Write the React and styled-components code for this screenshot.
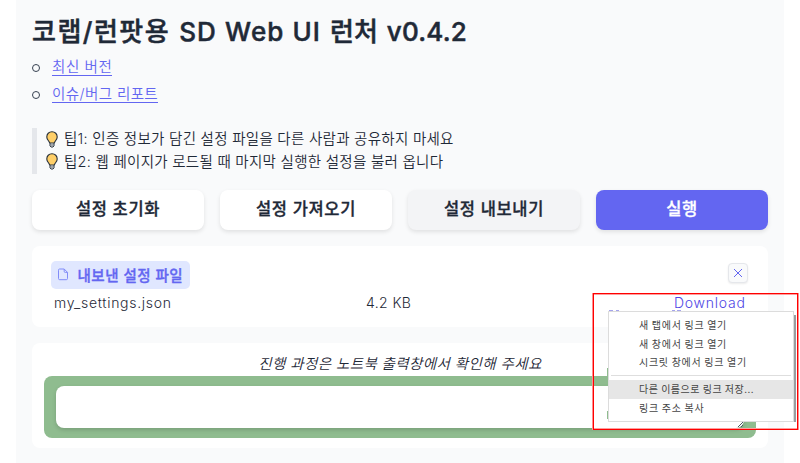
import React from "react";
import styled, { createGlobalStyle } from "styled-components";

const Global = createGlobalStyle`
  * { box-sizing: border-box; }
  body {
    margin: 0;
    background: #fff;
    overflow: hidden;
    color: #1f2937;
    font-family: Inter, "Noto Sans CJK KR", sans-serif;
  }
`;

const Page = styled.main`
  position: relative;
  width: 768px;
  height: 463px;
  margin-left: 16px;
  padding: 14px 16px 0;
  background: #f9fafb;
`;

const Title = styled.h1`
  display: flex;
  gap: 9px;
  margin: 0;
  height: 36px;
  line-height: 36px;
  font-size: 26px;
  font-weight: 500;
  -webkit-text-stroke: 0.5px currentColor;
  white-space: nowrap;
`;

const Run = styled.span`
  letter-spacing: ${(p) => p.$track || 0}px;
`;

const Links = styled.ul`
  margin: 3px 0 0;
  padding: 0;
  list-style: none;
`;

const LinkRow = styled.li`
  display: flex;
  align-items: center;
  height: 27px;
  &::before {
    content: "";
    width: 6px;
    height: 6px;
    flex: none;
    margin: 3px 14px 0 0;
    border: 1px solid #374151;
    border-radius: 50%;
  }
`;

const TextLink = styled.a`
  margin-left: -2px;
  color: #6366f1;
  font-size: 14.5px;
  line-height: 17px;
  font-weight: 350;
  letter-spacing: ${(p) => p.$track || 0}px;
  border-bottom: 1px solid #6366f1;
`;

const Tips = styled.blockquote`
  margin: 21px 0 0;
  height: 46px;
  padding-left: 9px;
  border-left: 5px solid #e5e7eb;
`;

const Tip = styled.p`
  display: flex;
  align-items: center;
  gap: 6px;
  margin: 0;
  height: 22.5px;
  font-size: 14.5px;
  font-weight: 350;
  white-space: nowrap;
  letter-spacing: 0.27px;
  & > span { margin-top: -3px; }
`;

const Buttons = styled.div`
  display: grid;
  grid-template-columns: repeat(4, 172px);
  justify-content: space-between;
  margin-top: 16px;
`;

const Button = styled.button`
  height: 40px;
  padding: 0 0 4px;
  border: 0;
  border-radius: 8px;
  background: ${(p) => (p.$primary ? "#6366f1" : p.$active ? "#f3f4f6" : "#fff")};
  color: ${(p) => (p.$primary ? "#fff" : "#1f2937")};
  box-shadow: 0 2px 4px rgba(0, 0, 0, 0.1);
  font: 500 16.5px Inter, "Noto Sans CJK KR", sans-serif;
  -webkit-text-stroke: 0.35px currentColor;
  letter-spacing: 0.65px;
`;

const Card = styled.section`
  margin-top: ${(p) => p.$gap}px;
  height: ${(p) => p.$height}px;
  padding: ${(p) => p.$pad};
  border-radius: 8px;
  background: #fff;
`;

const CardHead = styled.div`
  display: flex;
  justify-content: space-between;
`;

const Badge = styled.div`
  display: flex;
  align-items: center;
  gap: 9px;
  width: 139px;
  height: 28px;
  padding: 0 0 2px 7px;
  margin-left: 0.5px;
  border-radius: 5px;
  background: #e0e7ff;
  color: #6366f1;
  font-size: 14.5px;
  font-weight: 500;
  -webkit-text-stroke: 0.35px currentColor;
  letter-spacing: 0.5px;
  white-space: nowrap;
`;

const Close = styled.button`
  display: grid;
  place-items: center;
  width: 20px;
  height: 20px;
  margin: 2px 2px 0 0;
  padding: 0;
  border: 1px solid #e5e7eb;
  border-radius: 4px;
  background: #f9fafb;
  box-shadow: 0 1px 2px rgba(0, 0, 0, 0.08);
  color: #6366f1;
`;

const FileRow = styled.div`
  display: grid;
  grid-template-columns: 312px 308px 1fr;
  padding-left: 4px;
  height: 27px;
  line-height: 28px;
  font-size: 14px;
  font-weight: 350;
  color: #1f2937;
`;

const Download = styled.a`
  color: #4f46e5;
  letter-spacing: 0.75px;
`;

const Notice = styled.p`
  margin: 0;
  height: 33px;
  padding-top: 8px;
  line-height: 25px;
  text-align: center;
  font-size: 14.5px;
  font-weight: 350;
  font-style: italic;
  letter-spacing: 0.4px;
`;

const Progress = styled.div`
  height: 62px;
  padding: 10px 12px;
  border-radius: 8px;
  background: #8fbc8f;
`;

const Output = styled.div`
  display: flex;
  align-items: flex-end;
  justify-content: flex-end;
  height: 42px;
  border-radius: 8px;
  background: #fff;
  box-shadow: 0 2px 4px rgba(0, 0, 0, 0.15);
`;

const Highlight = styled.div`
  position: absolute;
  left: 577px;
  top: 293px;
  width: 205px;
  height: 137px;
  border: 1px solid #ff0000;
  box-shadow: -1px 0 0 #ff8d8d, inset 0 1px 0 #ff9d9d, inset 0 -1px 0 #ff9d9d, 1px 0 0 #ff8d8d;
`;

const Menu = styled.div`
  position: absolute;
  left: 592px;
  top: 311px;
  width: 186px;
  height: 111px;
  padding-top: 4px;
  background: #fff;
  border: 1px solid #dcdcdc;
`;

const MenuShadow = styled.div`
  position: absolute;
  left: 778px;
  top: 315px;
  width: 2px;
  height: 107px;
  background: #9a9da0;
`;

const Sliver = styled.div`
  position: absolute;
  left: 591px;
  top: ${(p) => p.$top}px;
  width: 1px;
  height: 8px;
  background: #8fbc8f;
`;

const Speck = styled.div`
  position: absolute;
  left: ${(p) => p.$left}px;
  top: 310px;
  width: ${(p) => p.$width}px;
  height: 1px;
  background: #a5a4ec;
`;

const MenuItem = styled.div`
  height: 18.7px;
  padding-left: 30px;
  line-height: 18.7px;
  color: #444;
  background: ${(p) => (p.$active ? "#e6e6e6" : "transparent")};
  font-family: "Noto Sans CJK KR", sans-serif;
  font-size: 10px;
  letter-spacing: ${(p) => (p.$active ? 0.5 : 0.7)}px;
  white-space: nowrap;
`;

const Separator = styled.div`
  height: 1px;
  margin: 3px 2px 4px;
  background: #dedede;
`;

const Bulb = () => (
  <svg width="12" height="17" viewBox="0 0 12 17">
    <path d="M4 11.5h4v3.3L7 16H5l-1-1.2z" fill="#f3f4f6" stroke="#27303b" />
    <path d="M6 .8C2.9.8.8 3 .8 5.9c0 2 1.1 3 2 4.3.5.8.6 1.4 1.2 1.8h4c.6-.4.7-1 1.2-1.8.9-1.3 2-2.3 2-4.3C11.2 3 9.1.8 6 .8z" fill="#ffcf68" stroke="#27303b" strokeWidth="1.1" />
    <path d="M4.5 14h3" stroke="#27303b" strokeWidth=".8" />
  </svg>
);

const FileIcon = () => (
  <svg width="11" height="13" viewBox="0 0 11 13" fill="none" stroke="#818cf8" strokeWidth="1">
    <path d="M1.5 1h4.700l3.300 3.400v6.100c0 .8-.4 1.200-1.200 1.200H1.700c-.8 0-1.200-.4-1.200-1.200V2.200C.5 1.400.8 1 1.500 1zM6.200 1v2.300c0 .8.3 1.100 1.100 1.100h2.200" />
  </svg>
);

const tips = [
  "팁1: 인증 정보가 담긴 설정 파일을 다른 사람과 공유하지 마세요",
  "팁2: 웹 페이지가 로드될 때 마지막 실행한 설정을 불러 옵니다",
];

export default function App() {
  return (
    <>
      <Global />
      <Page>
        <Title>
          <Run $track={1.5}>코랩/런팟용</Run>
          <Run $track={1.1}>SD Web UI</Run>
          <Run>런처</Run>
          <Run $track={0.2}>v0.4.2</Run>
        </Title>
        <Links>
          <LinkRow><TextLink $track={0.6}>최신 버전</TextLink></LinkRow>
          <LinkRow><TextLink $track={0.4}>이슈/버그 리포트</TextLink></LinkRow>
        </Links>
        <Tips>
          {tips.map((text) => (
            <Tip key={text}><Bulb /><span>{text}</span></Tip>
          ))}
        </Tips>
        <Buttons>
          <Button>설정 초기화</Button>
          <Button>설정 가져오기</Button>
          <Button $active>설정 내보내기</Button>
          <Button $primary>실행</Button>
        </Buttons>
        <Card $gap={16} $height={81} $pad="15px 18px 0">
          <CardHead>
            <Badge><FileIcon />내보낸 설정 파일</Badge>
            <Close>
              <svg width="10" height="10" viewBox="0 0 10 10" stroke="currentColor" fill="none">
                <path d="M1 1l8 8M9 1L1 9" />
              </svg>
            </Close>
          </CardHead>
          <FileRow>
            <Run $track={0.7}>my_settings.json</Run>
            <Run $track={0.4}>4.2 KB</Run>
            <Download>Download</Download>
          </FileRow>
        </Card>
        <Card $gap={16} $height={105} $pad="0 12px">
          <Notice>진행 과정은 노트북 출력창에서 확인해 주세요</Notice>
          <Progress>
            <Output>
              <svg width="7" height="7" viewBox="0 0 7 7" stroke="#4b5563" fill="none">
                <path d="M1 6l5-5M4 6l2-2" />
              </svg>
            </Output>
          </Progress>
        </Card>
        <Menu>
          <MenuItem>새 탭에서 링크 열기</MenuItem>
          <MenuItem>새 창에서 링크 열기</MenuItem>
          <MenuItem>시크릿 창에서 링크 열기</MenuItem>
          <Separator />
          <MenuItem $active>다른 이름으로 링크 저장...</MenuItem>
          <MenuItem>링크 주소 복사</MenuItem>
        </Menu>
        <MenuShadow />
        <Sliver $top={368} />
        <Sliver $top={411} />
        <Speck $left={593} $width={4} />
        <Speck $left={600} $width={3} />
        <Speck $left={656} $width={3} />
        <Speck $left={661} $width={4} />
        <Highlight />
      </Page>
    </>
  );
}
